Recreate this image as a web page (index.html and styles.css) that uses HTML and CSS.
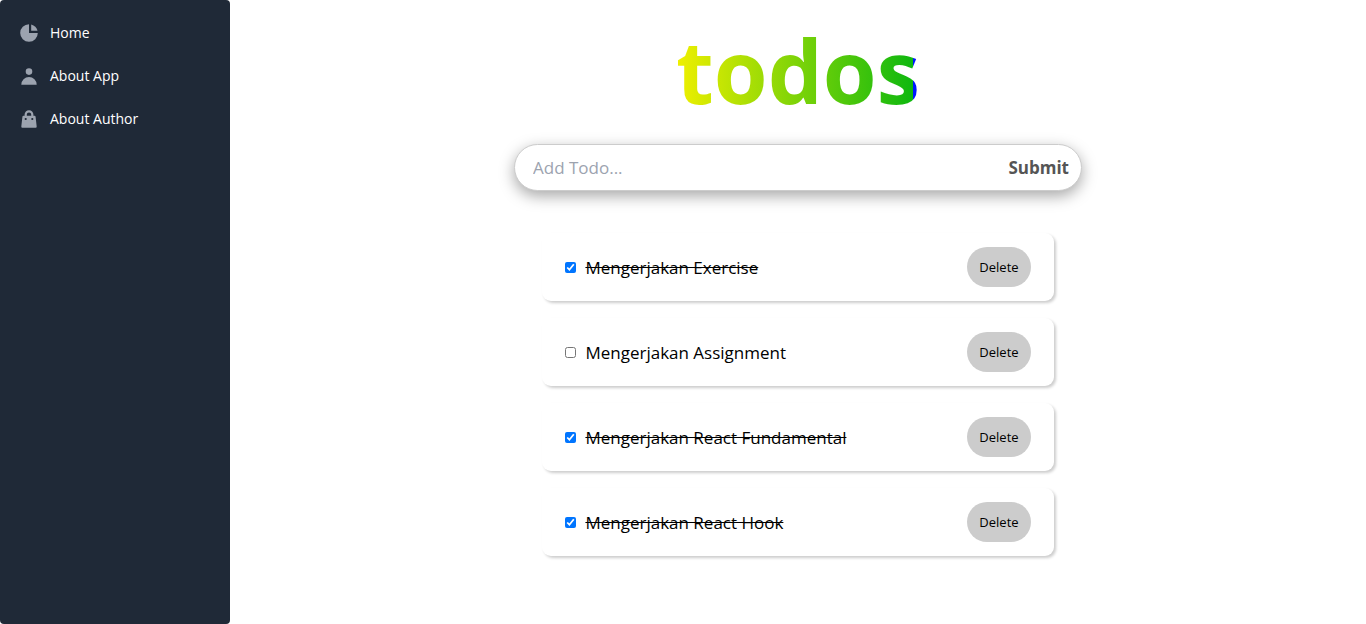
FILE: index.html
```
<!DOCTYPE html>
<html lang="id">
<head>
<meta charset="utf-8">
<meta name="viewport" content="width=device-width, initial-scale=1">
<title>todos</title>
<link rel="stylesheet" href="styles.css">
</head>
<body>
<div class="app">
  <aside class="sidebar">
    <nav>
      <ul class="menu">
        <li><a class="menu-link" href="#home">
          <svg class="menu-icon" viewBox="0 0 20 20" aria-hidden="true"><path d="M2 10a8 8 0 018-8v8h8a8 8 0 11-16 0z"/><path d="M12 2.252A8.014 8.014 0 0117.748 8H12V2.252z"/></svg>
          <span>Home</span></a></li>
        <li><a class="menu-link" href="#app">
          <svg class="menu-icon" viewBox="0 0 20 20" aria-hidden="true"><path fill-rule="evenodd" d="M10 9a3 3 0 100-6 3 3 0 000 6zm-7 9a7 7 0 1114 0H3z"/></svg>
          <span>About App</span></a></li>
        <li><a class="menu-link" href="#author">
          <svg class="menu-icon" viewBox="0 0 20 20" aria-hidden="true"><path fill-rule="evenodd" d="M10 2a4 4 0 00-4 4v1H5a1 1 0 00-.994.89l-1 9A1 1 0 004 18h12a1 1 0 00.994-1.11l-1-9A1 1 0 0015 7h-1V6a4 4 0 00-4-4zm2 5V6a2 2 0 10-4 0v1h4zm-6 3a1 1 0 112 0 1 1 0 01-2 0zm7-1a1 1 0 100 2 1 1 0 000-2z"/></svg>
          <span>About Author</span></a></li>
      </ul>
    </nav>
  </aside>
  <main class="content">
    <h1 class="title">todos</h1>
    <form class="add-form">
      <input class="add-input" type="text" placeholder="Add Todo..." aria-label="Add Todo">
      <button class="add-submit" type="submit">Submit</button>
    </form>
    <ul class="todos">
      <li class="todo">
        <label class="todo-label"><input class="todo-check" type="checkbox" checked><span class="todo-text">Mengerjakan Exercise</span></label>
        <button class="todo-delete" type="button">Delete</button>
      </li>
      <li class="todo">
        <label class="todo-label"><input class="todo-check" type="checkbox"><span class="todo-text">Mengerjakan Assignment</span></label>
        <button class="todo-delete" type="button">Delete</button>
      </li>
      <li class="todo">
        <label class="todo-label"><input class="todo-check" type="checkbox" checked><span class="todo-text">Mengerjakan React Fundamental</span></label>
        <button class="todo-delete" type="button">Delete</button>
      </li>
      <li class="todo">
        <label class="todo-label"><input class="todo-check" type="checkbox" checked><span class="todo-text">Mengerjakan React Hook</span></label>
        <button class="todo-delete" type="button">Delete</button>
      </li>
    </ul>
  </main>
</div>
</body>
</html>
```
FILE: styles.css
```
* { box-sizing: border-box; }

body {
  margin: 0;
  background: #fff;
  color: #000;
  font-family: "Open Sans", "Noto Sans", sans-serif;
}

button, input { font: inherit; }

ul {
  list-style: none;
  margin: 0;
  padding: 0;
}

.app {
  display: flex;
  min-height: 100vh;
}

.sidebar {
  flex: 0 0 230px;
  padding: 14px 10px;
  background: #1f2937;
  border-radius: 4px;
}

.menu {
  display: grid;
  gap: 5px;
}

.menu-link {
  display: flex;
  align-items: center;
  gap: 10px;
  padding: 8px;
  color: #fff;
  font-size: 14px;
  font-weight: 500;
  line-height: 22px;
  text-decoration: none;
}

.menu-icon {
  width: 22px;
  height: 22px;
  fill: #9ca3af;
}

.content {
  flex: 1;
  min-width: 0;
  display: flex;
  flex-direction: column;
  align-items: center;
  padding: 22px 0;
}

.title {
  margin: 0 0 26px;
  font-size: 87px;
  font-weight: 700;
  line-height: 96px;
  color: transparent;
  background: linear-gradient(90deg, #f0f000, #0fb80f 97%, #0018ff 97%);
  background-clip: text;
  -webkit-background-clip: text;
}

.add-form {
  display: flex;
  width: 50%;
  padding: 0 12px 0 18px;
  background: #fff;
  border: 1px solid #ccc;
  border-radius: 24px;
  box-shadow: 0 5px 15px rgba(0, 0, 0, 0.35);
  font-size: 17px;
  line-height: 27px;
}

.add-input {
  flex: 1;
  min-width: 0;
  padding: 9px 0;
  border: 0;
  outline: 0;
  background: transparent;
}

.add-input::placeholder { color: #9ca3af; }

.add-submit {
  padding: 0;
  border: 0;
  background: none;
  color: #555;
  font-weight: 700;
}

.todos {
  display: grid;
  gap: 17px;
  width: 45%;
  margin-top: 42px;
}

.todo {
  display: flex;
  align-items: center;
  justify-content: space-between;
  padding: 14px 23px;
  border-radius: 9px;
  box-shadow: 2px 2px 3px rgba(0, 0, 0, 0.2);
}

.todo-label {
  display: flex;
  align-items: center;
  gap: 9px;
  font-size: 17px;
  line-height: 27px;
}

.todo-check {
  width: 11px;
  height: 11px;
  margin: 0;
  accent-color: #0075ff;
}

.todo-check:checked + .todo-text { text-decoration: line-through; }

.todo-delete {
  padding: 10px 12px;
  border: 0;
  border-radius: 20px;
  background: #ccc;
  color: #000;
  font-size: 13px;
  line-height: 20px;
}
```
